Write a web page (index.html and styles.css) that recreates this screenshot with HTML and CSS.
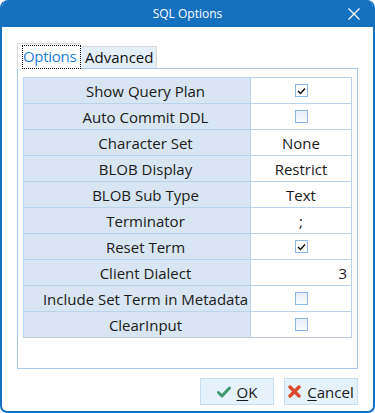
FILE: index.html
```html
<!DOCTYPE html>
<html>
<head>
<meta charset="utf-8">
<link rel="stylesheet" href="styles.css">
</head>
<body>
<div class="window">
  <div class="titlebar">
    <span class="title">SQL Options</span>
    <svg class="close" width="12" height="12" viewBox="0 0 12 12"><path d="M0.5 0.5 L11.5 11.5 M11.5 0.5 L0.5 11.5" stroke="#fff" stroke-width="1.2" fill="none"/></svg>
  </div>
  <div class="content">
    <div class="tabs">
      <div class="tab active"><span class="focus">Options</span></div>
      <div class="tab">Advanced</div>
    </div>
    <div class="panel">
      <div class="grid">
        <div class="row"><div class="name">Show Query Plan</div><div class="val"><span class="cb checked"><svg width="9" height="8" viewBox="0 0 9 8"><path d="M1 4 L3.5 6.5 L8 1.5" stroke="#111" stroke-width="1.5" fill="none"/></svg></span></div></div>
        <div class="row"><div class="name">Auto Commit DDL</div><div class="val"><span class="cb"></span></div></div>
        <div class="row"><div class="name">Character Set</div><div class="val">None</div></div>
        <div class="row"><div class="name">BLOB Display</div><div class="val">Restrict</div></div>
        <div class="row"><div class="name">BLOB Sub Type</div><div class="val">Text</div></div>
        <div class="row"><div class="name">Terminator</div><div class="val">;</div></div>
        <div class="row"><div class="name">Reset Term</div><div class="val"><span class="cb checked"><svg width="9" height="8" viewBox="0 0 9 8"><path d="M1 4 L3.5 6.5 L8 1.5" stroke="#111" stroke-width="1.5" fill="none"/></svg></span></div></div>
        <div class="row"><div class="name">Client Dialect</div><div class="val right">3</div></div>
        <div class="row"><div class="name">Include Set Term in Metadata</div><div class="val"><span class="cb"></span></div></div>
        <div class="row last"><div class="name">ClearInput</div><div class="val"><span class="cb"></span></div></div>
      </div>
    </div>
    <div class="buttons">
      <div class="btn">
        <svg width="14" height="12" viewBox="0 0 14 12"><path d="M1.5 6.5 L5 10 L12.5 2" stroke="#3f9b6e" stroke-width="3" fill="none" stroke-linecap="round" stroke-linejoin="round"/></svg>
        <span><u>O</u>K</span>
      </div>
      <div class="btn">
        <svg width="13" height="13" viewBox="0 0 13 13"><path d="M2 2 L11 11 M11 2 L2 11" stroke="#dc4a2c" stroke-width="3.4" fill="none" stroke-linecap="round"/></svg>
        <span><u>C</u>ancel</span>
      </div>
    </div>
  </div>
</div>
</body>
</html>
```
FILE: styles.css
```css
html, body {
  margin: 0;
  padding: 0;
  background: #ffffff;
}
body {
  font-family: "Open Sans", "Noto Sans", sans-serif;
  color: #1a1a1a;
}
.window {
  width: 375px;
  height: 413px;
  box-sizing: border-box;
  border: 2px solid #1570c0;
  border-top: 0;
  border-radius: 8px 8px 7px 7px;
  background: #fff;
  display: flex;
  flex-direction: column;
  overflow: hidden;
}
.titlebar {
  height: 27px;
  flex: none;
  background: #1570c0;
  margin: 0 -2px;
  display: flex;
  align-items: center;
  justify-content: center;
  position: relative;
}
.title {
  color: #fff;
  font-size: 12px;
  line-height: 27px;
}
.close {
  position: absolute;
  right: 15px;
  top: 8px;
}
.content {
  flex: 1;
  display: flex;
  flex-direction: column;
  padding: 16px 15px 6px 15px;
}
.tabs {
  display: flex;
  align-items: flex-end;
  height: 25px;
  position: relative;
  z-index: 1;
}
.tab {
  box-sizing: border-box;
  height: 22px;
  padding: 0 3px 0 4px;
  background: #e3eef9;
  border: 1px solid #d9d9d9;
  border-left: 0;
  border-bottom: 0;
  font-size: 15px;
  line-height: 21px;
  color: #111;
  white-space: nowrap;
}
.tab.active {
  height: 26px;
  margin-bottom: -1px;
  background: #fff;
  border-left: 1px solid #d9d9d9;
  border-right: 0;
  padding: 1px 0 0 4px;
  width: 64px;
}
.focus {
  display: block;
  box-sizing: border-box;
  height: 24px;
  border: 1px dotted #000;
  color: #1a7fd8;
  line-height: 21px;
  letter-spacing: -0.3px;
}
.panel {
  box-sizing: border-box;
  height: 301px;
  border: 1px solid #a7c7e8;
  padding: 8px 5px 0 5px;
}
.grid {
  border: 1px solid #b9d3ec;
  border-bottom: 0;
}
.row {
  display: grid;
  grid-template-columns: 227px 1fr;
  height: 26px;
  box-sizing: border-box;
  border-bottom: 1px solid #b9d3ec;
}
.row.last {
  border-bottom-color: #c3cad3;
}
.name {
  background: #d9e5f2;
  border-right: 1px solid #b9d3ec;
  text-align: center;
  font-size: 15px;
  line-height: 23px;
  padding: 2px 0 0 17px;
  white-space: nowrap;
}
.val {
  background: #fff;
  text-align: center;
  font-size: 15px;
  line-height: 23px;
  padding-top: 2px;
  display: flex;
  align-items: center;
  justify-content: center;
}
.val.right {
  justify-content: flex-end;
  padding-right: 4px;
}
.cb {
  width: 13px;
  height: 13px;
  box-sizing: border-box;
  border: 1px solid #8db5e6;
  background: linear-gradient(#e6eef9, #fbfdff);
  display: flex;
  align-items: center;
  justify-content: center;
  margin: -2px 0 0 1px;
}
.cb.checked {
  background: #fff;
}
.buttons {
  display: flex;
  justify-content: flex-end;
  gap: 10px;
  margin-top: 9px;
}
.btn {
  width: 74px;
  height: 27px;
  box-sizing: border-box;
  background: #e5f1fb;
  border: 1px solid #c7ddf2;
  display: flex;
  align-items: center;
  justify-content: center;
  gap: 6px;
  font-size: 15px;
  color: #1a1a1a;
}
.btn u {
  text-decoration-thickness: 1px;
  text-underline-offset: 2px;
}
```
